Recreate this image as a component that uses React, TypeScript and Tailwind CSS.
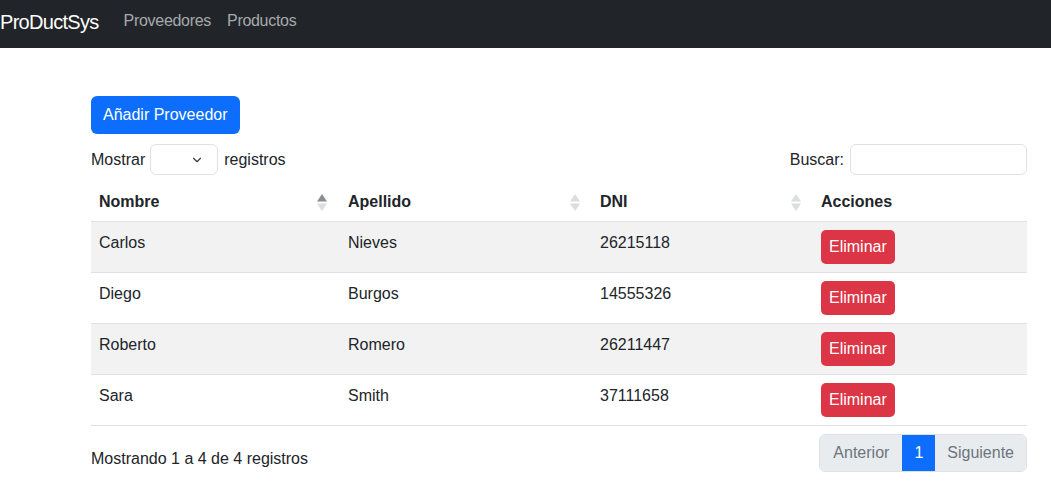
import { ChevronDown } from 'lucide-react';

const rows = [
  { nombre: 'Carlos', apellido: 'Nieves', dni: '26215118' },
  { nombre: 'Diego', apellido: 'Burgos', dni: '14555326' },
  { nombre: 'Roberto', apellido: 'Romero', dni: '26211447' },
  { nombre: 'Sara', apellido: 'Smith', dni: '37111658' },
];

function SortIcon({ active }: { active?: boolean }) {
  return (
    <svg width="10" height="17" viewBox="0 0 10 17" className="shrink-0">
      <path d="M5 0 L10 7.5 L0 7.5 Z" fill={active ? '#8a8c8f' : '#dcdde0'} />
      <path d="M5 17 L10 9.5 L0 9.5 Z" fill="#dcdde0" />
    </svg>
  );
}

export default function App() {
  const font = { fontFamily: '"Segoe UI", "Liberation Sans", Arial, sans-serif' };

  return (
    <div className="min-h-[502px] bg-white text-[16px] leading-6 text-[#212529]" style={font}>
      {/* Navbar */}
      <nav className="h-12 bg-[#212529] flex items-center">
        <span className="text-[20px] leading-[30px] tracking-[-0.7px] text-white mr-[25px] -mt-[5px]">ProDuctSys</span>
        <div className="flex items-center gap-4 -mt-[7px]">
          <a className="text-[#a7a9ab] tracking-[-0.3px]">Proveedores</a>
          <a className="text-[#a7a9ab] tracking-[-0.3px]">Productos</a>
        </div>
      </nav>

      <main className="ml-[91px] w-[936px] pt-12">
        <button className="h-[38px] px-3 rounded-[6px] bg-[#0d6efd] text-white">Añadir Proveedor</button>

        {/* Length + search */}
        <div className="mt-[10px] h-[31px] flex items-center justify-between">
          <div className="flex items-center">
            <span>Mostrar</span>
            <div className="ml-[5px] mr-[6px] w-[68px] h-[31px] border border-[#dee2e6] rounded-[6px] flex items-center justify-end pr-[13px]">
              <ChevronDown className="w-[14px] h-[14px] text-[#343a40]" strokeWidth={2} />
            </div>
            <span>registros</span>
          </div>
          <div className="flex items-center">
            <span className="mr-[6px]">Buscar:</span>
            <div className="w-[177px] h-[31px] border border-[#dee2e6] rounded-[6px]" />
          </div>
        </div>

        {/* Table */}
        <table className="mt-[6px] w-full border-collapse">
          <thead>
            <tr className="border-b border-[#dee2e6]">
              <th className="w-[249px] px-2 pt-[9px] pb-[7px] pr-[13px] text-left font-bold">
                <div className="flex items-center justify-between">Nombre<SortIcon active /></div>
              </th>
              <th className="w-[252px] px-2 pt-[9px] pb-[7px] pr-[12px] text-left font-bold">
                <div className="flex items-center justify-between">Apellido<SortIcon /></div>
              </th>
              <th className="w-[221px] px-2 pt-[9px] pb-[7px] pr-[12px] text-left font-bold">
                <div className="flex items-center justify-between">DNI<SortIcon /></div>
              </th>
              <th className="px-2 pt-[9px] pb-[7px] text-left font-bold">Acciones</th>
            </tr>
          </thead>
          <tbody>
            {rows.map((r, i) => (
              <tr key={r.dni} className={`border-b border-[#dee2e6] ${i % 2 === 0 ? 'bg-[#f2f2f2]' : 'bg-white'}`}>
                <td className="px-2 pt-[9px] pb-[7px] align-top">{r.nombre}</td>
                <td className="px-2 pt-[9px] pb-[7px] align-top">{r.apellido}</td>
                <td className="px-2 pt-[9px] pb-[7px] align-top">{r.dni}</td>
                <td className="p-2 align-top">
                  <button className="h-[34px] px-[8px] rounded-[5px] bg-[#dc3545] text-white">Eliminar</button>
                </td>
              </tr>
            ))}
          </tbody>
        </table>

        {/* Footer */}
        <div className="mt-[8px] flex items-start justify-between">
          <div className="pt-[13px]">Mostrando 1 a 4 de 4 registros</div>
          <div className="flex h-[38px] rounded-[6px] border border-[#dee2e6] overflow-hidden">
            <span className="px-[13px] flex items-center bg-[#e9ecef] text-[#6c757d]">Anterior</span>
            <span className="px-3 flex items-center bg-[#0d6efd] text-white">1</span>
            <span className="px-3 flex items-center bg-[#e9ecef] text-[#6c757d]">Siguiente</span>
          </div>
        </div>
      </main>
    </div>
  );
}
